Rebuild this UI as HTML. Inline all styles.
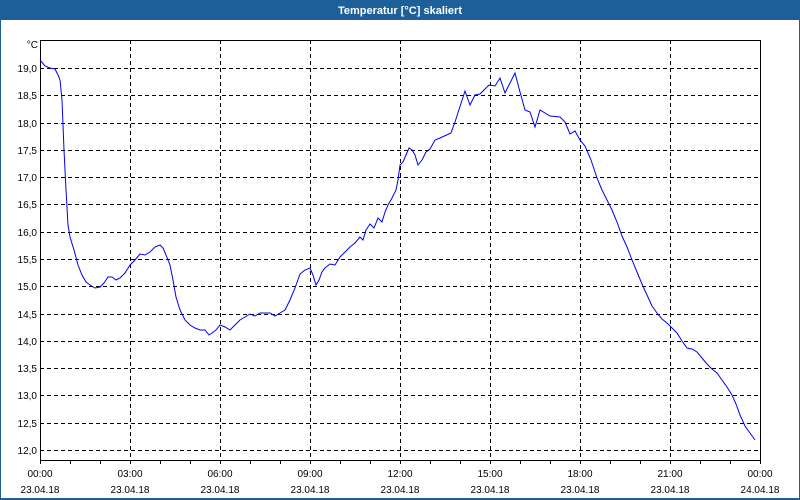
<!DOCTYPE html>
<html><head><meta charset="utf-8"><style>
html,body{margin:0;padding:0;width:800px;height:500px;overflow:hidden;background:#fff}
</style></head><body>
<svg width="800" height="500" xmlns="http://www.w3.org/2000/svg" font-family="Liberation Sans, sans-serif" font-size="10">
<rect x="0" y="0" width="800" height="500" fill="#1d5f99"/>
<rect x="1" y="20" width="798" height="478" fill="#fff"/>
<text x="400" y="14" fill="#fff" font-weight="bold" font-size="11" text-anchor="middle">Temperatur [°C] skaliert</text>
<g stroke="#000" stroke-dasharray="4,3" stroke-width="1">
<line x1="40" x2="760" y1="68.5" y2="68.5"/><line x1="40" x2="760" y1="95.5" y2="95.5"/><line x1="40" x2="760" y1="123.5" y2="123.5"/><line x1="40" x2="760" y1="150.5" y2="150.5"/><line x1="40" x2="760" y1="177.5" y2="177.5"/><line x1="40" x2="760" y1="204.5" y2="204.5"/><line x1="40" x2="760" y1="232.5" y2="232.5"/><line x1="40" x2="760" y1="259.5" y2="259.5"/><line x1="40" x2="760" y1="286.5" y2="286.5"/><line x1="40" x2="760" y1="314.5" y2="314.5"/><line x1="40" x2="760" y1="341.5" y2="341.5"/><line x1="40" x2="760" y1="368.5" y2="368.5"/><line x1="40" x2="760" y1="395.5" y2="395.5"/><line x1="40" x2="760" y1="423.5" y2="423.5"/><line x1="40" x2="760" y1="450.5" y2="450.5"/>
<line y1="40" y2="460" x1="130.5" x2="130.5"/><line y1="40" y2="460" x1="220.5" x2="220.5"/><line y1="40" y2="460" x1="310.5" x2="310.5"/><line y1="40" y2="460" x1="400.5" x2="400.5"/><line y1="40" y2="460" x1="490.5" x2="490.5"/><line y1="40" y2="460" x1="580.5" x2="580.5"/><line y1="40" y2="460" x1="670.5" x2="670.5"/>
</g>
<rect x="40.5" y="40.5" width="720" height="420" fill="none" stroke="#000"/>
<g stroke="#000">
<path d="M70.5 461v3M100.5 461v3M130.5 461v3M160.5 461v3M190.5 461v3M220.5 461v3M250.5 461v3M280.5 461v3M310.5 461v3M340.5 461v3M370.5 461v3M400.5 461v3M430.5 461v3M460.5 461v3M490.5 461v3M520.5 461v3M550.5 461v3M580.5 461v3M610.5 461v3M640.5 461v3M670.5 461v3M700.5 461v3M730.5 461v3M40.5 461v3M760.5 461v3"/>
</g>
<polyline fill="none" stroke="#0000ee" stroke-width="1" points="40,60 45,66 50,68 55,69 58,75 60,80 62,100 64,150 66,190 68,225 70,237 74,250 78,265 82,275 86,282 90,285 95,288 100,287 104,283 108,277 112,277 116,280 120,278 125,273 130,265 135,260 140,254 145,255 150,252 155,247 160,245 163,248 166,255 170,265 173,280 176,297 180,310 185,320 190,325 195,328 200,330 205,330 209,335 212,333 216,330 220,325 225,327 230,330 235,325 240,320 245,317 250,314 255,316 260,313 265,313 270,313 275,316 280,313 285,310 290,300 295,288 300,274 305,270 310,268 313,275 316,285 319,280 322,272 325,268 330,264 335,265 340,257 345,252 350,247 355,243 360,237 363,240 366,230 370,224 374,228 378,218 382,222 385,212 388,205 392,198 396,190 398,180 400,165 403,162 406,155 409,148 412,150 415,155 418,165 422,160 426,152 430,149 435,140 440,138 451,133 455,122 465,91 470,105 475,95 480,94 489,85 495,86 500,78 505,93 515,73 520,92 525,110 530,112 535,127 540,110 550,116 560,117 565,122 570,134 575,131 580,140 585,146 591,160 597,178 602,190 607,200 612,210 617,222 622,236 627,247 632,260 637,272 642,284 647,295 652,306 657,313 662,319 667,323 672,328 677,333 682,341 687,348 692,349 697,352 702,358 707,364 712,369 717,373 722,380 727,387 732,395 736,404 740,415 745,426 750,433 755,440"/>
<g fill="#000" text-anchor="end">
<text x="38" y="48">°C</text>
<text x="37" y="72">19,0</text><text x="37" y="99">18,5</text><text x="37" y="127">18,0</text><text x="37" y="154">17,5</text><text x="37" y="181">17,0</text><text x="37" y="208">16,5</text><text x="37" y="236">16,0</text><text x="37" y="263">15,5</text><text x="37" y="290">15,0</text><text x="37" y="318">14,5</text><text x="37" y="345">14,0</text><text x="37" y="372">13,5</text><text x="37" y="399">13,0</text><text x="37" y="427">12,5</text><text x="37" y="454">12,0</text>
</g>
<g fill="#000" text-anchor="middle">
<text x="40" y="477">00:00</text><text x="40" y="493">23.04.18</text>
<text x="130" y="477">03:00</text><text x="130" y="493">23.04.18</text>
<text x="220" y="477">06:00</text><text x="220" y="493">23.04.18</text>
<text x="310" y="477">09:00</text><text x="310" y="493">23.04.18</text>
<text x="400" y="477">12:00</text><text x="400" y="493">23.04.18</text>
<text x="490" y="477">15:00</text><text x="490" y="493">23.04.18</text>
<text x="580" y="477">18:00</text><text x="580" y="493">23.04.18</text>
<text x="670" y="477">21:00</text><text x="670" y="493">23.04.18</text>
<text x="760" y="477">00:00</text><text x="760" y="493">24.04.18</text>
</g>
</svg>
</body></html>
